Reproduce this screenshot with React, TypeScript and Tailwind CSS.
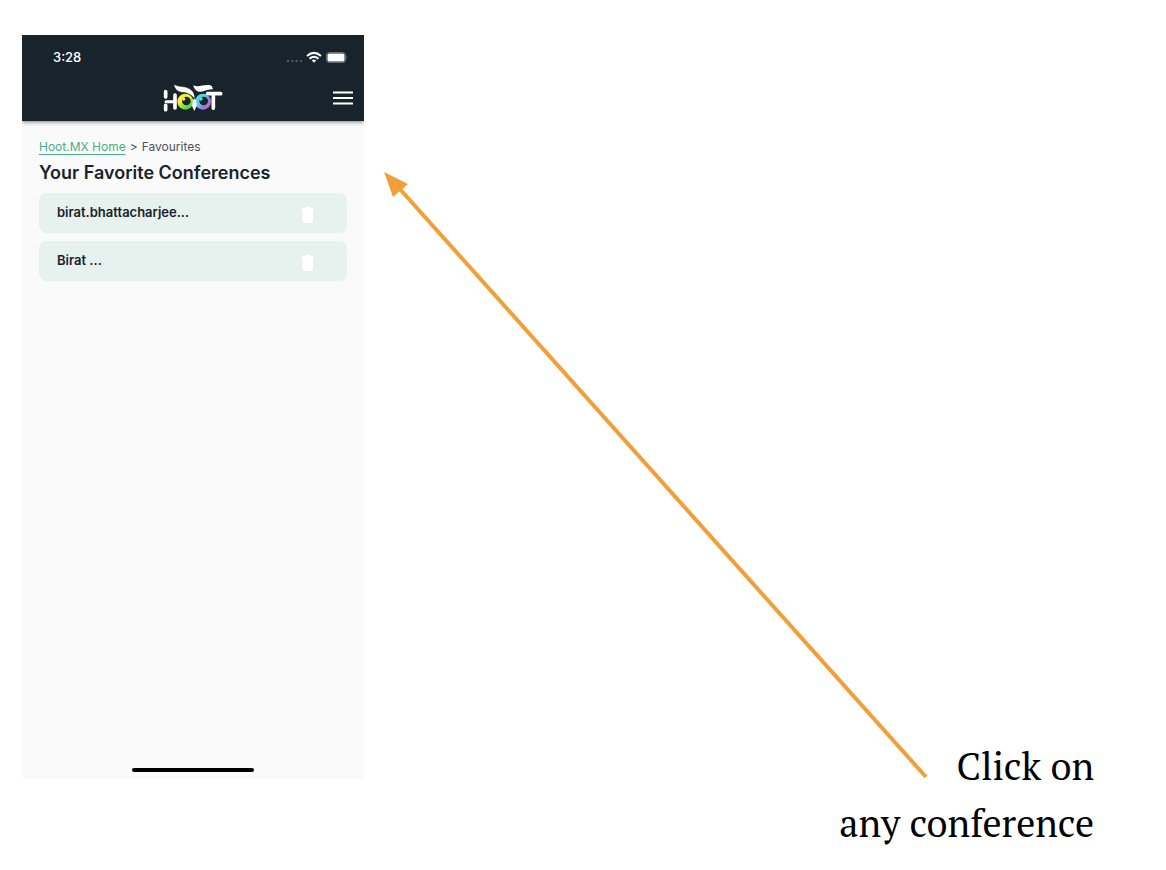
import React from "react";

const conferences = ["birat.bhattacharjee...", "Birat ..."];

function Logo() {
  return (
    <svg width="60" height="30" viewBox="0 0 180 90" role="img" aria-label="Hoot">
      <defs>
        <linearGradient id="leftEye" x1="0" y1="0" x2="0.6" y2="1">
          <stop offset="0.45" stopColor="#f4ee3a" />
          <stop offset="0.9" stopColor="#55d943" />
        </linearGradient>
        <linearGradient id="rightEye" x1="0" y1="0.1" x2="1" y2="0.9">
          <stop offset="0.4" stopColor="#4fd5e3" />
          <stop offset="0.65" stopColor="#8a86d8" />
          <stop offset="1" stopColor="#ed4fae" />
        </linearGradient>
      </defs>
      <g stroke="#fff" strokeWidth="11" strokeLinecap="round" fill="none">
        <path d="M8 26V42M8 67V80M36 36V75" />
        <path d="M9 56H34" strokeWidth="9" />
        <path d="M134 32H173M151 34V76" />
      </g>
      <circle cx="67" cy="56" r="24" fill="url(#leftEye)" />
      <circle cx="70" cy="54" r="13" fill="#18232c" />
      <circle cx="62" cy="48" r="5" fill="#f4ee3a" />
      <circle cx="120" cy="56" r="24" fill="url(#rightEye)" />
      <circle cx="122" cy="54" r="13" fill="#18232c" />
      <circle cx="114" cy="48" r="5" fill="#65dbe5" />
      <path
        d="M33 4C43 13 63 8 79 17C92 24 94 34 96 48C84 33 70 28 55 28C43 25 35 18 33 4Z"
        fill="#fff"
        stroke="#18232c"
        strokeWidth="1"
      />
      <path
        d="M91 7C107 15 125 2 145 8C149 11 147 15 151 19C132 17 120 29 107 26C98 23 92 17 91 7Z"
        fill="#fff"
      />
      <path d="M90 51Q95 44 99 52L101 69L94 84L87 69Z" fill="#fff" />
    </svg>
  );
}

function StatusIcons() {
  return (
    <svg width="62" height="14" viewBox="0 0 62 14" aria-hidden="true">
      <g fill="#4c565d">
        <circle cx="2" cy="11" r="1.3" />
        <circle cx="6.3" cy="11" r="1.3" />
        <circle cx="10.6" cy="11" r="1.3" />
        <circle cx="14.9" cy="11" r="1.3" />
      </g>
      <g fill="none" stroke="#fff" strokeWidth="2">
        <path d="M21 6Q28 -0.3 35 6" />
        <path d="M23.5 8.7Q28 4.8 32.5 8.7" />
      </g>
      <path d="M25.7 10.2Q28 8.6 30.3 10.2L28 12.7Z" fill="#fff" />
      <rect x="40.5" y="2.5" width="19" height="10" rx="2.5" fill="none" stroke="#667078" />
      <rect x="41.5" y="3.5" width="17" height="8" rx="1.5" fill="#fff" />
      <path d="M60.7 6Q62.3 7.5 60.7 9Z" fill="#667078" />
    </svg>
  );
}

function TrashIcon() {
  return (
    <svg width="14" height="18" viewBox="0 0 14 18" fill="#fff" aria-hidden="true">
      <path d="M0.5 2H4L5 1H9L10 2H13V4H0.5Z" />
      <path d="M1.5 4H12V15Q12 17 10 17H3.5Q1.5 17 1.5 15Z" />
    </svg>
  );
}

function Phone() {
  return (
    <section className="flex min-h-[744px] w-[342px] shrink-0 flex-col overflow-hidden bg-[#fafafa] font-['Inter',sans-serif] text-[#18232c]">
      <header className="bg-[#18232c] text-white shadow-[0_1px_4px_rgba(0,0,0,0.5)]">
        <div className="flex h-11 items-center justify-between pr-4 pl-[31px]">
          <time className="pt-px text-[13px] font-medium">3:28</time>
          <StatusIcons />
        </div>
        <div className="grid h-[42px] grid-cols-[1fr_auto_1fr] items-center pr-[11px] pb-1">
          <span />
          <div className="pl-[11px]">
            <Logo />
          </div>
          <button type="button" aria-label="Menu" className="justify-self-end">
            <svg width="20" height="16" viewBox="0 0 20 16" stroke="#fff" strokeWidth="2" aria-hidden="true">
              <path d="M0 2.5H20M0 8H20M0 13.5H20" />
            </svg>
          </button>
        </div>
      </header>

      <div className="flex-1 px-[17px] pt-4">
        <nav aria-label="Breadcrumb" className="flex gap-1 text-xs leading-5 text-[#4d5257]">
          <a href="#home" className="text-[#4bae88] underline underline-offset-3">
            Hoot.MX Home
          </a>
          <span>&gt;</span>
          <span>Favourites</span>
        </nav>
        <h1 className="mt-1 text-lg leading-6 font-semibold">Your Favorite Conferences</h1>
        <ul className="mt-2 flex flex-col gap-2">
          {conferences.map((name) => (
            <li key={name} className="flex h-10 items-center justify-between rounded-lg bg-[#e7f1ee] pr-8 pl-[18px]">
              <a href="#conference" className="text-[13px] font-semibold">
                {name}
              </a>
              <button type="button" aria-label={`Remove ${name}`} className="pt-1">
                <TrashIcon />
              </button>
            </li>
          ))}
        </ul>
      </div>

      <div className="mx-auto mb-[7px] h-1 w-[122px] rounded-full bg-black" />
    </section>
  );
}

export default function App() {
  return (
    <main className="relative flex min-h-screen items-start justify-between bg-white pt-[35px] pr-[72px] pl-[22px]">
      <Phone />
      <svg
        className="pointer-events-none absolute top-[171px] left-[383px]"
        width="546"
        height="610"
        viewBox="0 0 546 610"
        aria-hidden="true"
      >
        <path d="M16 17L543 606" stroke="#f19f38" strokeWidth="4" />
        <path d="M1 1L25 13L10 26Z" fill="#f19f38" />
      </svg>
      <p className="mt-[703px] text-right font-['PT_Serif','Noto_Serif','Liberation_Serif',serif] text-[38px] leading-[57px] text-black">
        Click on
        <br />
        any conference
      </p>
    </main>
  );
}
